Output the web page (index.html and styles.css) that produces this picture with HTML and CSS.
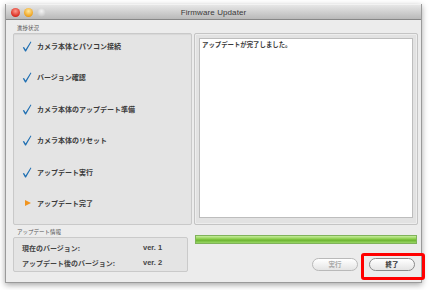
FILE: index.html
```html
<!DOCTYPE html>
<html lang="ja">
<head>
<meta charset="utf-8">
<title>Firmware Updater</title>
<link rel="stylesheet" href="styles.css">
</head>
<body>
<div class="window">
  <div class="titlebar">
    <div class="lights">
      <span class="light red"></span>
      <span class="light yellow"></span>
      <span class="light gray"></span>
    </div>
    <div class="title">Firmware Updater</div>
  </div>
  <div class="content">
    <div class="label lbl1">進捗状況</div>
    <div class="steps">
      <div class="step"><span class="mark"><svg class="check" viewBox="0 0 10 11" width="10" height="11"><path d="M0.8 6.6 L2 5.9 L3.6 8.4 L8.6 0.6 L9.4 1.1 L4 10.4 L3.1 10.4 Z" fill="#1f6fb2"/></svg></span><span>カメラ本体とパソコン接続</span></div>
      <div class="step"><span class="mark"><svg class="check" viewBox="0 0 10 11" width="10" height="11"><path d="M0.8 6.6 L2 5.9 L3.6 8.4 L8.6 0.6 L9.4 1.1 L4 10.4 L3.1 10.4 Z" fill="#1f6fb2"/></svg></span><span>バージョン確認</span></div>
      <div class="step"><span class="mark"><svg class="check" viewBox="0 0 10 11" width="10" height="11"><path d="M0.8 6.6 L2 5.9 L3.6 8.4 L8.6 0.6 L9.4 1.1 L4 10.4 L3.1 10.4 Z" fill="#1f6fb2"/></svg></span><span>カメラ本体のアップデート準備</span></div>
      <div class="step"><span class="mark"><svg class="check" viewBox="0 0 10 11" width="10" height="11"><path d="M0.8 6.6 L2 5.9 L3.6 8.4 L8.6 0.6 L9.4 1.1 L4 10.4 L3.1 10.4 Z" fill="#1f6fb2"/></svg></span><span>カメラ本体のリセット</span></div>
      <div class="step"><span class="mark"><svg class="check" viewBox="0 0 10 11" width="10" height="11"><path d="M0.8 6.6 L2 5.9 L3.6 8.4 L8.6 0.6 L9.4 1.1 L4 10.4 L3.1 10.4 Z" fill="#1f6fb2"/></svg></span><span>アップデート実行</span></div>
      <div class="step"><span class="mark arrow"></span><span>アップデート完了</span></div>
    </div>
    <div class="log">
      <div class="log-inner">アップデートが完了しました。</div>
    </div>
    <div class="label lbl2">アップデート情報</div>
    <div class="info">
      <div class="info-row"><span class="k">現在のバージョン:</span><span class="v">ver. 1</span></div>
      <div class="info-row"><span class="k">アップデート後のバージョン:</span><span class="v">ver. 2</span></div>
    </div>
    <div class="bottom">
      <div class="progress"></div>
      <div class="buttons">
        <button class="btn disabled">実行</button>
        <button class="btn">終了</button>
      </div>
    </div>
  </div>
  <div class="highlight"></div>
</div>
</body>
</html>
```

FILE: styles.css
```css
* { box-sizing: border-box; }
html, body { margin: 0; padding: 0; background: #ffffff; }
body {
  width: 430px;
  height: 290px;
  overflow: hidden;
  font-family: "Noto Sans CJK JP", "Liberation Sans", sans-serif;
  color: #333;
}
.window {
  position: relative;
  width: 417px;
  height: 279px;
  margin: 4px 0 0 5px;
  background: #ececec;
  border: 1px solid #9a9a9a;
  border-top: none;
  box-shadow: 0 2px 6px rgba(0,0,0,0.35);
}
.titlebar {
  position: relative;
  height: 16px;
  background: linear-gradient(#e6e6e6, #b9b9b9);
  border-bottom: 1px solid #878787;
  border-top: 1px solid #f2f2f2;
  display: flex;
  align-items: center;
  justify-content: center;
}
.lights {
  position: absolute;
  left: 5px;
  top: 3px;
  display: flex;
  gap: 4px;
}
.light {
  width: 9px;
  height: 9px;
  border-radius: 50%;
  display: block;
}
.light.red { background: radial-gradient(circle at 50% 35%, #ff9c8f, #d92b1f 70%, #9b1b12); }
.light.yellow { background: radial-gradient(circle at 50% 35%, #ffe9a0, #f0a21c 70%, #b26e08); }
.light.gray { background: radial-gradient(circle at 50% 35%, #f4f4f4, #c9c9c9 70%, #9d9d9d); }
.title {
  font-family: "Liberation Sans", "DejaVu Sans", sans-serif;
  font-size: 8px;
  color: #3a3a3a;
  letter-spacing: 0.1px;
}
.content {
  display: grid;
  grid-template-columns: 179px 224px;
  grid-template-rows: 13px 192px 12px 35px;
  column-gap: 2px;
  grid-template-areas:
    "lbl1 ."
    "steps log"
    "lbl2 bottom"
    "info bottom";
  padding: 0 0 0 7px;
}
.label {
  font-size: 5.5px;
  color: #555;
  display: flex;
  align-items: flex-end;
  padding-left: 4px;
  padding-bottom: 1px;
}
.lbl1 { grid-area: lbl1; }
.lbl2 { grid-area: lbl2; }
.steps {
  grid-area: steps;
  background: #e4e4e4;
  border: 1px solid #c9c9c9;
  border-radius: 2px;
  box-shadow: inset 0 1px 1px rgba(0,0,0,0.06);
  padding: 6px 0 0 7px;
  display: flex;
  flex-direction: column;
  gap: 19.4px;
}
.step {
  height: 12px;
  display: flex;
  align-items: center;
  font-size: 7px;
  font-weight: bold;
  color: #3b3b3b;
}
.mark {
  width: 16px;
  display: flex;
  align-items: center;
}
.check {
  display: block;
  margin-left: 1px;
  margin-top: 1px;
}
.arrow::before {
  content: "";
  display: block;
  margin-left: 4px;
  width: 0;
  height: 0;
  border-left: 6px solid #f0941f;
  border-top: 3.5px solid transparent;
  border-bottom: 3.5px solid transparent;
}
.log {
  grid-area: log;
  background: #e2e2e2;
  border: 1px solid #c4c4c4;
  border-radius: 2px;
  box-shadow: inset 0 0 0 1px #ededed;
  padding: 4px 4px 6px 4px;
}
.log-inner {
  height: 100%;
  background: #ffffff;
  border: 1px solid #bdbdbd;
  font-size: 6.4px;
  font-weight: bold;
  color: #3b3b3b;
  padding: 1px 2px;
}
.info {
  grid-area: info;
  width: 175px;
  background: #e4e4e4;
  border: 1px solid #cacaca;
  border-radius: 2px;
  padding: 4px 0 0 8px;
  display: flex;
  flex-direction: column;
  gap: 4px;
}
.info-row {
  display: flex;
  height: 11px;
  align-items: center;
  font-size: 7px;
  font-weight: bold;
  color: #444;
}
.info-row .k { width: 121px; }
.info-row .v {
  font-family: "Liberation Sans", sans-serif;
  font-size: 7.5px;
}
.bottom {
  grid-area: bottom;
  padding: 10px 0 0 1px;
  display: flex;
  flex-direction: column;
}
.progress {
  height: 9px;
  width: 222px;
  border: 1px solid #7fb35a;
  background: linear-gradient(#c7ec9f, #8fd04f 40%, #6cb530 60%, #9ad766);
}
.buttons {
  display: flex;
  justify-content: flex-end;
  gap: 11px;
  margin-top: 14px;
  padding-right: 3px;
}
.btn {
  width: 46px;
  height: 13px;
  border-radius: 7px;
  border: 1px solid #8a8a8a;
  background: linear-gradient(#ffffff, #e4e4e4);
  font-family: "Noto Sans CJK JP", sans-serif;
  font-size: 6.5px;
  font-weight: bold;
  color: #333;
  padding: 0;
  line-height: 11px;
}
.btn.disabled {
  color: #a8a8a8;
  border-color: #b9b9b9;
}
.highlight {
  position: absolute;
  left: 355px;
  top: 249px;
  width: 64px;
  height: 27px;
  border: 3px solid #ff0000;
  border-radius: 3px;
}
```
